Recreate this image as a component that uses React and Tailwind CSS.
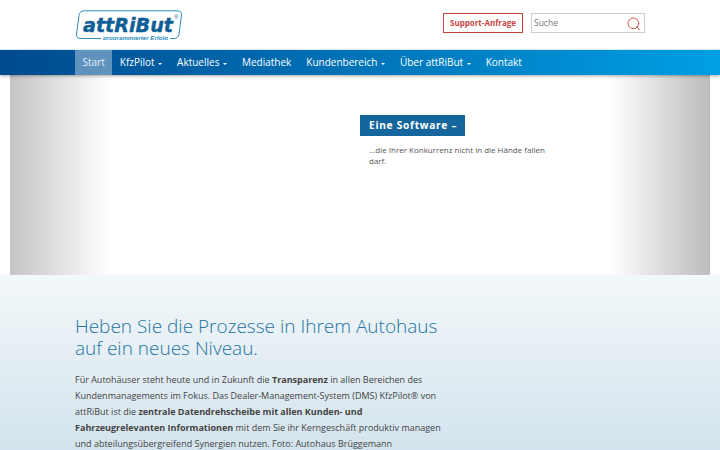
import React from 'react';
import { Search } from 'lucide-react';

const navItems = [
  { label: 'Start', active: true },
  { label: 'KfzPilot', caret: true },
  { label: 'Aktuelles', caret: true },
  { label: 'Mediathek' },
  { label: 'Kundenbereich', caret: true },
  { label: 'Über attRiBut', caret: true },
  { label: 'Kontakt' },
];

function Logo() {
  return (
    <svg width="108" height="30" viewBox="0 0 108 30" className="block">
      <path
        d="M26 28.5 H6 Q1 28.5 1.5 24 L4 5.5 Q4.8 0.8 9 0.8 H102 Q107 0.8 106.5 5 L104 24 Q103.4 28.5 98 28.5 H95"
        fill="none"
        stroke="#2b8cbe"
        strokeWidth="1"
      />
      <text x="8" y="22" fontFamily="'DejaVu Sans', sans-serif" fontSize="19" fontWeight="700" fontStyle="italic" fill="#0f5f96" stroke="#0f5f96" strokeWidth="0.4" textLength="90" lengthAdjust="spacingAndGlyphs">
        attRiBut
      </text>
      <text x="99" y="9" fontFamily="'Liberation Sans', sans-serif" fontSize="6" fill="#0f5f96">®</text>
      <text x="28" y="30" fontFamily="'Liberation Sans', sans-serif" fontSize="6" fontStyle="italic" fontWeight="700" fill="#2b8cbe" textLength="65" lengthAdjust="spacingAndGlyphs">
        programmierter Erfolg
      </text>
    </svg>
  );
}

export default function App() {
  return (
    <div className="h-[450px] w-[720px] overflow-hidden bg-white font-['Open_Sans',sans-serif] text-[#444]">
      {/* Header */}
      <header className="flex h-[50px] items-start justify-between border-b border-[#e8f6fb] bg-white px-[75px]">
        <div className="pt-[10px]">
          <Logo />
        </div>
        <div className="flex items-center gap-[8px] pt-[13px]">
          <a className="flex h-[20px] w-[80px] items-center justify-center border border-[#c9463f] text-[8px] font-bold text-[#c9463f]">
            Support-Anfrage
          </a>
          <div className="flex h-[20px] w-[114px] items-center justify-between border border-[#ccc] pl-[2px] pr-[2px] pt-[1px] text-[8.5px] text-[#777]">
            <span>Suche</span>
            <Search size={16} strokeWidth={1.4} className="text-[#c9463f]" />
          </div>
        </div>
      </header>

      {/* Navigation */}
      <nav className="relative z-10 flex h-[25px] items-stretch bg-gradient-to-r from-[#004a8f] to-[#009fe3] pl-[75px] text-[10px] text-white shadow-[0_1px_3px_rgba(0,0,0,0.35)]">
        {navItems.map((item) => (
          <a
            key={item.label}
            className={`flex items-center gap-[3.5px] px-[7.5px] ${item.active ? 'bg-[#5f92bd] text-[#e6eef5]' : ''}`}
          >
            {item.label}
            {item.caret && <span className="mt-[2px] h-0 w-0 border-x-[2px] border-t-[2px] border-x-transparent border-t-white" />}
          </a>
        ))}
      </nav>

      {/* Hero */}
      <section className="flex h-[200px] bg-white px-[10px]">
        <div className="flex h-full w-full bg-[linear-gradient(to_right,#c4c4c4_0,#ffffff_100px,#ffffff_600px,#bcbcbc_700px)] pl-[350px] pt-[40px]">
          <div>
            <h2 className="flex h-[21px] w-[105px] items-center bg-[#14669c] pl-[9px] text-[10.2px] font-bold tracking-[0.7px] text-white">
              Eine Software –
            </h2>
            <p className="mt-[8px] w-[190px] pl-[9px] text-[8px] leading-[11px] text-[#555]">
              ...die Ihrer Konkurrenz nicht in die Hände fallen darf.
            </p>
          </div>
        </div>
      </section>

      {/* Content */}
      <main className="h-[175px] bg-gradient-to-b from-[#f3f8fa] to-[#d3e3ed] pl-[75px] pt-[40px]">
        <h1 className="w-[385px] text-[19px] font-light leading-[22px] text-[#2474a3]">
          Heben Sie die Prozesse in Ihrem Autohaus auf ein neues Niveau.
        </h1>
        <p className="mt-[13px] w-[375px] text-[9px] leading-[16px] text-[#444]">
          Für Autohäuser steht heute und in Zukunft die <b>Transparenz</b> in allen Bereichen des Kundenmanagements im Fokus. Das Dealer-Management-System (DMS) KfzPilot® von attRiBut ist die <b>zentrale Datendrehscheibe mit allen Kunden- und Fahrzeugrelevanten Informationen</b> mit dem Sie ihr Kerngeschäft produktiv managen und abteilungsübergreifend Synergien nutzen. Foto: Autohaus Brüggemann
        </p>
      </main>
    </div>
  );
}
